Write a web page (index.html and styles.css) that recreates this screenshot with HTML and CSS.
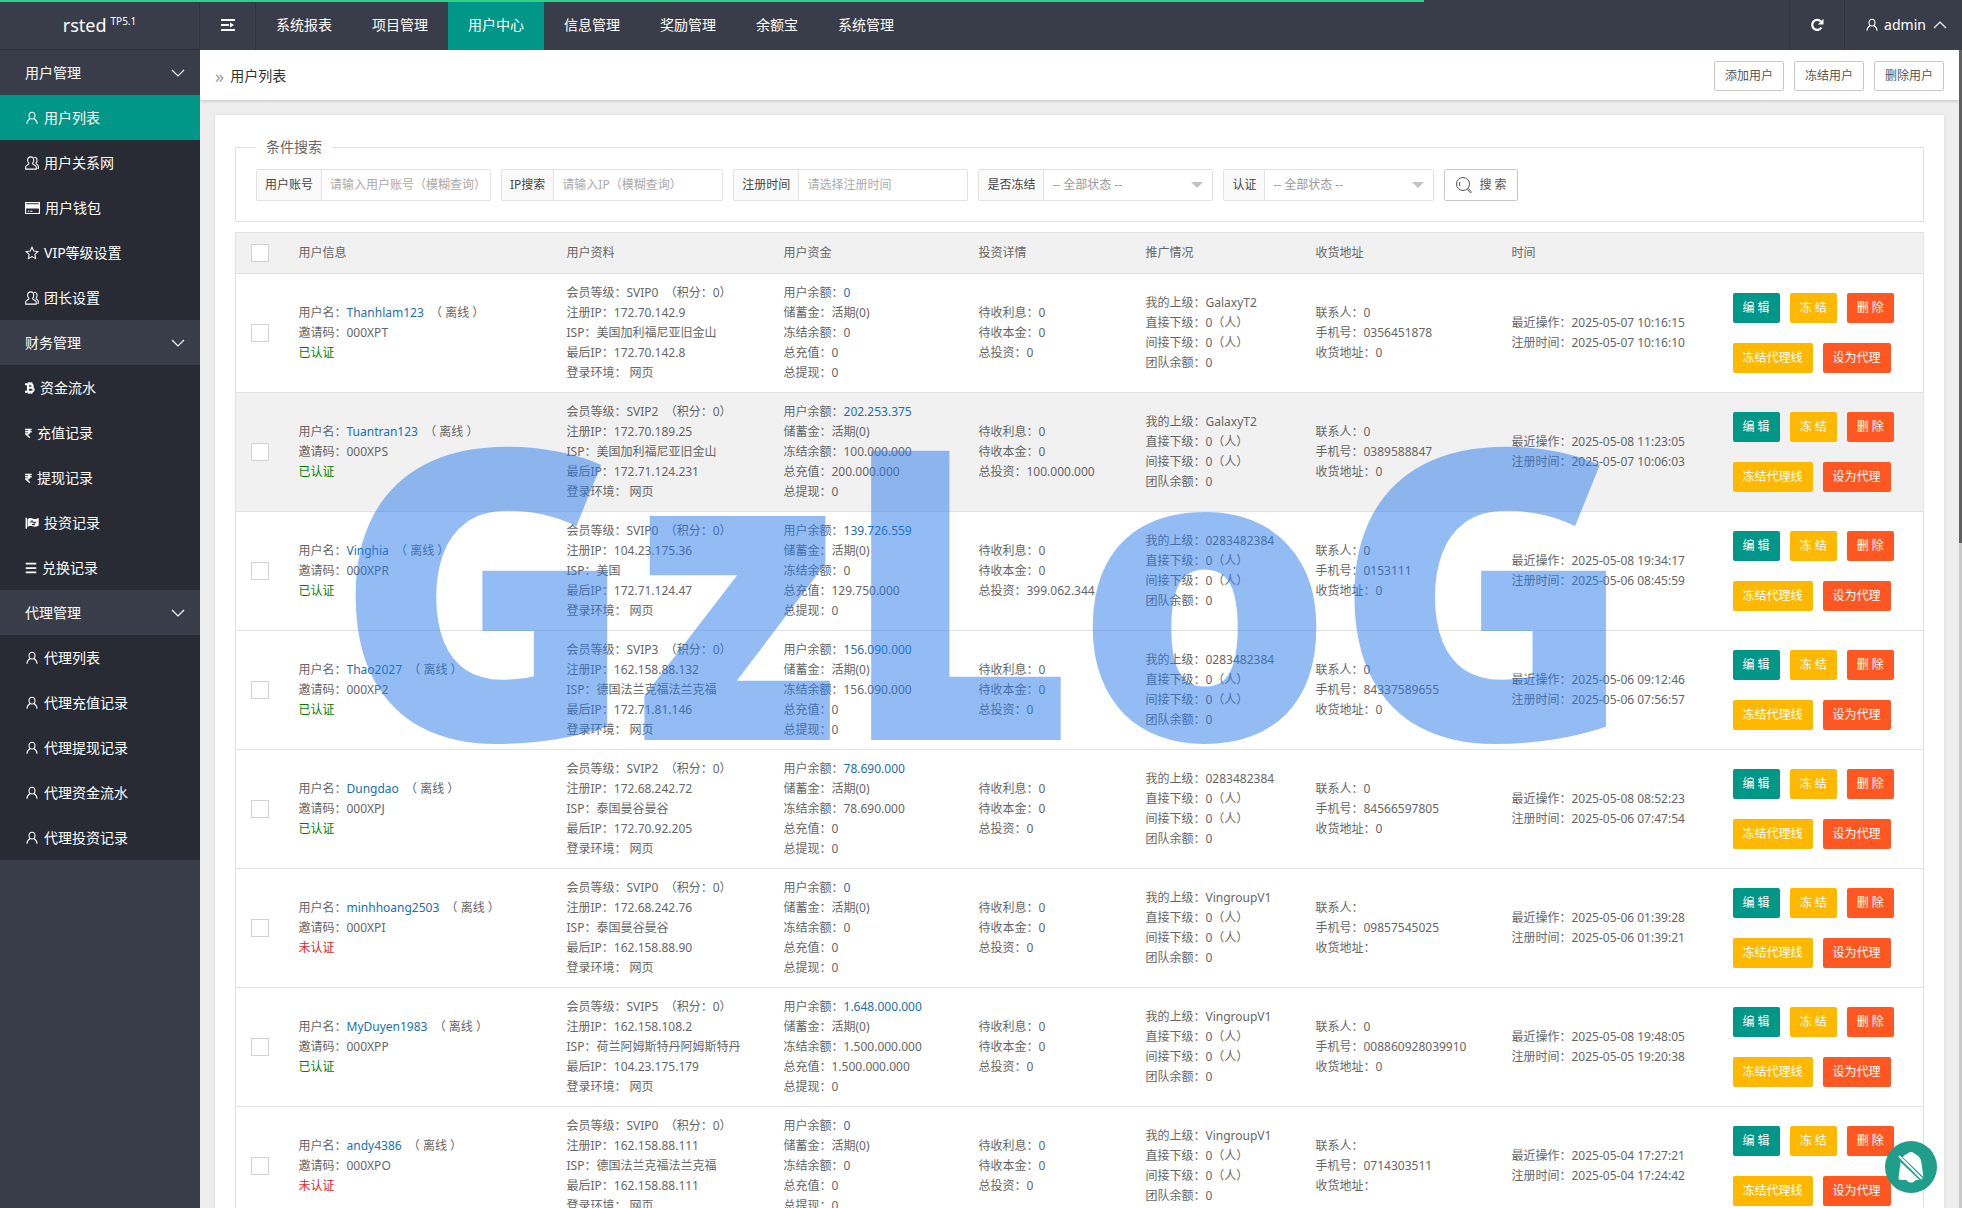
FILE: index.html
```html
<!DOCTYPE html>
<html lang="zh-CN">
<head>
    <meta charset="UTF-8">
    <meta name="viewport" content="width=device-width, initial-scale=1.0">
    <title>用户列表</title>
    <link rel="stylesheet" href="styles.css">
</head>
<body>
    <!-- icon set -->
    <svg class="sprite" aria-hidden="true">
        <symbol id="i-user" viewBox="0 0 16 16"><path d="M8 9.2c-2 0-3.4-1.7-3.4-4S6 1.4 8 1.4s3.4 1.6 3.4 3.8S10 9.200 8 9.200zM6 8.600c-2 1-3.600 3-3.800 6M10 8.600c2 1 3.600 3 3.800 6"/></symbol>
        <symbol id="i-group" viewBox="0 0 16 16"><path d="M6.500 1c2.200 0 3.500 1.600 3.500 3.800 0 1.700-.8 2.900-1.400 3.700-.3 1.200 3.700 1.700 4.300 3.700V15H.8v-2.800c.5-2 4-2.500 3.700-3.700C3.800 7.700 3 6.500 3 4.800 3 2.600 4.300 1 6.500 1zM10.500 1.400c2 0 3.300 1.400 3.300 3.400 0 1.700-.7 2.700-1.200 3.400-.1 1.200 2.500 1.800 2.800 3.800V14H14"/></symbol>
        <symbol id="i-card" viewBox="0 0 16 14"><path d="M.6 1.200h14.800v11.600H.6zM3 10.500h1.500M5.500 10.500H8"/><path fill="currentColor" d="M1 3.700h14v3.300H1z"/></symbol>
        <symbol id="i-star" viewBox="0 0 16 16"><path d="M8 1.500l2 4.300 4.700.6-3.400 3.300.8 4.700L8 12.100l-4.100 2.300.8-4.700L1.300 6.400 6 5.800z"/></symbol>
        <symbol id="i-btc" viewBox="0 0 12 16"><path stroke-width="2.400" d="M0 3.500h6.500c3.600 0 3.600 4.200 0 4.200H3.500M7 7.700c4.500 0 4.500 4.800 0 4.800H0M3.500 3.500v9M4.700 1v2M7.700 1v2M4.700 13v2M7.700 13v2"/></symbol>
        <symbol id="i-rupee" viewBox="0 0 10 16"><path stroke-width="2" d="M0 3h9.500M0 6.200h9.500M0 3h3c4.500 0 4.500 6.200 0 6.200H1l6 5.500"/></symbol>
        <symbol id="i-flag" viewBox="0 0 16 16"><path stroke-width="1.600" d="M1.500 2v12.500"/><path fill="currentColor" d="M3.500 4c2-1.500 4-1 5.500-.3s3 .6 6-.7v7.500c-2.500 1.300-4.300 1.400-6 .6s-3.500-.8-5.500.4z"/><path stroke="#282b33" d="M5.500 7.200l2.500-.7v-2M8 6.500l2.500 1 2.500-.7M8 9.500l2.500.5V7.500"/></symbol>
        <symbol id="i-bars" viewBox="0 0 12 16"><path stroke-width="2" d="M0 3h12M0 8h12M0 13h12"/></symbol>
        <symbol id="i-down" viewBox="0 0 14 14"><path d="M1 4l6 6 6-6"/></symbol>
        <symbol id="i-up" viewBox="0 0 14 14"><path d="M1 10l6-6 6 6"/></symbol>
        <symbol id="i-fold" viewBox="0 0 14 14"><path stroke-width="2" d="M0 2h14M0 7h8M0 12h14"/><path fill="currentColor" stroke="none" d="M9 4.500L13 7 9 9.500z"/></symbol>
        <symbol id="i-refresh" viewBox="0 0 14 14"><path stroke-width="2.200" d="M11.500 9.500a5 5 0 1 1-.6-6"/><path fill="currentColor" stroke="none" d="M13.500.8v5.700H7.800z"/></symbol>
        <symbol id="i-search" viewBox="0 0 18 18"><circle cx="8" cy="8" r="6.500"/><path d="M5 6a4 4 0 0 0 0 4M13 12.500l3.500 3.300-1 1-3.400-3.500"/></symbol>
    </svg>

    <div class="progress"></div>

    <header class="topbar">
        <a class="logo" href="#">rsted <sup>TP5.1</sup></a>
        <a class="fold" href="#" aria-label="菜单"><svg class="icon"><use href="#i-fold"/></svg></a>
        <nav class="nav">
            <a href="#">系统报表</a>
            <a href="#">项目管理</a>
            <a href="#" class="active">用户中心</a>
            <a href="#">信息管理</a>
            <a href="#">奖励管理</a>
            <a href="#">余额宝</a>
            <a href="#">系统管理</a>
        </nav>
        <a class="refresh" href="#" aria-label="刷新"><svg class="icon"><use href="#i-refresh"/></svg></a>
        <a class="account" href="#"><svg class="icon"><use href="#i-user"/></svg>admin<svg class="icon caret"><use href="#i-up"/></svg></a>
    </header>

    <div class="layout">
        <aside class="sidebar">
            <a class="group" href="#">用户管理<svg class="icon"><use href="#i-down"/></svg></a>
            <a class="item active" href="#"><svg class="icon"><use href="#i-user"/></svg>用户列表</a>
            <a class="item" href="#"><svg class="icon"><use href="#i-group"/></svg>用户关系网</a>
            <a class="item" href="#"><svg class="icon wide"><use href="#i-card"/></svg>用户钱包</a>
            <a class="item" href="#"><svg class="icon"><use href="#i-star"/></svg>VIP等级设置</a>
            <a class="item" href="#"><svg class="icon"><use href="#i-group"/></svg>团长设置</a>
            <a class="group" href="#">财务管理<svg class="icon"><use href="#i-down"/></svg></a>
            <a class="item" href="#"><svg class="icon narrow"><use href="#i-btc"/></svg>资金流水</a>
            <a class="item" href="#"><svg class="icon slim"><use href="#i-rupee"/></svg>充值记录</a>
            <a class="item" href="#"><svg class="icon slim"><use href="#i-rupee"/></svg>提现记录</a>
            <a class="item" href="#"><svg class="icon"><use href="#i-flag"/></svg>投资记录</a>
            <a class="item" href="#"><svg class="icon bars"><use href="#i-bars"/></svg>兑换记录</a>
            <a class="group" href="#">代理管理<svg class="icon"><use href="#i-down"/></svg></a>
            <a class="item" href="#"><svg class="icon"><use href="#i-user"/></svg>代理列表</a>
            <a class="item" href="#"><svg class="icon"><use href="#i-user"/></svg>代理充值记录</a>
            <a class="item" href="#"><svg class="icon"><use href="#i-user"/></svg>代理提现记录</a>
            <a class="item" href="#"><svg class="icon"><use href="#i-user"/></svg>代理资金流水</a>
            <a class="item" href="#"><svg class="icon"><use href="#i-user"/></svg>代理投资记录</a>
        </aside>

        <main class="main">
            <div class="crumb">
                <span class="arrows">»</span>
                <h1>用户列表</h1>
                <button class="btn" type="button">添加用户</button>
                <button class="btn" type="button">冻结用户</button>
                <button class="btn" type="button">删除用户</button>
            </div>

            <div class="card">
                <form>
                    <fieldset class="search">
                        <legend>条件搜索</legend>
                        <div class="field">
                            <label for="username">用户账号</label>
                            <input id="username" type="text" placeholder="请输入用户账号（模糊查询）">
                        </div>
                        <div class="field">
                            <label for="ip">IP搜索</label>
                            <input id="ip" type="text" placeholder="请输入IP（模糊查询）">
                        </div>
                        <div class="field">
                            <label for="regtime">注册时间</label>
                            <input id="regtime" type="text" placeholder="请选择注册时间">
                        </div>
                        <div class="field select">
                            <label for="frozen">是否冻结</label>
                            <select id="frozen"><option>-- 全部状态 --</option></select>
                        </div>
                        <div class="field select">
                            <label for="verified">认证</label>
                            <select id="verified"><option>-- 全部状态 --</option></select>
                        </div>
                        <button class="btn btn-search" type="button"><svg class="icon"><use href="#i-search"/></svg>搜 索</button>
                    </fieldset>
                </form>

                <table class="users">
                    <colgroup>
                        <col class="c-check">
                        <col class="c-info">
                        <col class="c-profile">
                        <col class="c-funds">
                        <col class="c-invest">
                        <col class="c-promo">
                        <col class="c-address">
                        <col class="c-time">
                        <col>
                    </colgroup>
                    <thead>
                        <tr>
                            <th><input type="checkbox" aria-label="全选"></th>
                            <th>用户信息</th>
                            <th>用户资料</th>
                            <th>用户资金</th>
                            <th>投资详情</th>
                            <th>推广情况</th>
                            <th>收货地址</th>
                            <th>时间</th>
                            <th></th>
                        </tr>
                    </thead>
                    <tbody id="rows"></tbody>
                </table>
            </div>
        </main>
        <div class="scroll"></div>
    </div>

    <div class="watermark">GzLoG</div>

    <button class="bell" type="button" aria-label="通知">
        <svg viewBox="0 0 52 52"><path fill="#fff" d="M26 11c2 0 3 1.500 4 2 4 1.500 6 5 6.500 9l2 15c0 1.500-1 2-3 2h-5c-1 2-3 2.500-4.500 2.500s-3.500-.5-4.500-2.500h-5c-2 0-3-.5-3-2l2-15c.5-4 3-8 6.500-9 1-.5 2-2 4-2z"/><path stroke="#1f9e8c" stroke-width="5" d="M14 16l24 23"/><path stroke="#fff" stroke-width="2" d="M14 15l23 23"/></svg>
    </button>

    <script>
        // name, code, verified, level, reg ip, isp, last ip, balance, frozen, recharge, invested, superior, contact, phone, address, last active, registered
        const users = [
            ['Thanhlam123', '000XPT', true, 'SVIP0', '172.70.142.9', '美国加利福尼亚旧金山', '172.70.142.8', '0', '0', '0', '0', 'GalaxyT2', '0', '0356451878', '0', '2025-05-07 10:16:15', '2025-05-07 10:16:10'],
            ['Tuantran123', '000XPS', true, 'SVIP2', '172.70.189.25', '美国加利福尼亚旧金山', '172.71.124.231', '202.253.375', '100.000.000', '200.000.000', '100.000.000', 'GalaxyT2', '0', '0389588847', '0', '2025-05-08 11:23:05', '2025-05-07 10:06:03'],
            ['Vinghia', '000XPR', true, 'SVIP0', '104.23.175.36', '美国', '172.71.124.47', '139.726.559', '0', '129.750.000', '399.062.344', '0283482384', '0', '0153111', '0', '2025-05-08 19:34:17', '2025-05-06 08:45:59'],
            ['Thao2027', '000XP2', true, 'SVIP3', '162.158.88.132', '德国法兰克福法兰克福', '172.71.81.146', '156.090.000', '156.090.000', '0', '0', '0283482384', '0', '84337589655', '0', '2025-05-06 09:12:46', '2025-05-06 07:56:57'],
            ['Dungdao', '000XPJ', true, 'SVIP2', '172.68.242.72', '泰国曼谷曼谷', '172.70.92.205', '78.690.000', '78.690.000', '0', '0', '0283482384', '0', '84566597805', '0', '2025-05-08 08:52:23', '2025-05-06 07:47:54'],
            ['minhhoang2503', '000XPI', false, 'SVIP0', '172.68.242.76', '泰国曼谷曼谷', '162.158.88.90', '0', '0', '0', '0', 'VingroupV1', '', '09857545025', '', '2025-05-06 01:39:28', '2025-05-06 01:39:21'],
            ['MyDuyen1983', '000XPP', true, 'SVIP5', '162.158.108.2', '荷兰阿姆斯特丹阿姆斯特丹', '104.23.175.179', '1.648.000.000', '1.500.000.000', '1.500.000.000', '0', 'VingroupV1', '0', '008860928039910', '0', '2025-05-08 19:48:05', '2025-05-05 19:20:38'],
            ['andy4386', '000XPO', false, 'SVIP0', '162.158.88.111', '德国法兰克福法兰克福', '162.158.88.111', '0', '0', '0', '0', 'VingroupV1', '', '0714303511', '', '2025-05-04 17:27:21', '2025-05-04 17:24:42']
        ];

        document.getElementById('rows').innerHTML = users.map(function (u) {
            const [name, code, verified, level, regIp, isp, lastIp, balance, frozen, recharge, invested, superior, contact, phone, address, active, registered] = u;
            return `<tr>
                <td><input type="checkbox" aria-label="${name}"></td>
                <td>用户名：<a href="#">${name}</a>&nbsp; （ 离线 ）<br>邀请码：${code}<br>${verified ? '<span class="ok">已认证</span>' : '<span class="no">未认证</span>'}</td>
                <td>会员等级：${level}&nbsp; （积分：0）<br>注册IP：${regIp}<br>ISP：${isp}<br>最后IP：${lastIp}<br>登录环境： 网页</td>
                <td>用户余额：<a href="#">${balance}</a><br>储蓄金：活期(0)<br>冻结余额：${frozen}<br>总充值：${recharge}<br>总提现：0</td>
                <td>待收利息：0<br>待收本金：0<br>总投资：${invested}</td>
                <td>我的上级：${superior}<br>直接下级：0（人）<br>间接下级：0（人）<br>团队余额：0</td>
                <td>联系人：${contact}<br>手机号：${phone}<br>收货地址：${address}</td>
                <td>最近操作：${active}<br>注册时间：${registered}</td>
                <td>
                    <div class="ops">
                        <button class="op green" type="button">编 辑</button>
                        <button class="op yellow" type="button">冻 结</button>
                        <button class="op red" type="button">删 除</button>
                    </div>
                    <div class="ops">
                        <button class="op yellow" type="button">冻结代理线</button>
                        <button class="op red" type="button">设为代理</button>
                    </div>
                </td>
            </tr>`;
        }).join('');
    </script>
</body>
</html>
```

FILE: styles.css
```css
* {
    box-sizing: border-box;
}
body {
    margin: 0;
    height: 100vh;
    display: flex;
    flex-direction: column;
    overflow: hidden;
    background: #eee;
    color: #666;
    font: 12px/20px "Noto Sans", "Noto Sans CJK SC", sans-serif;
}
a {
    color: #1a6fb0;
    text-decoration: none;
}
button, input, select {
    font: inherit;
    color: inherit;
}
.sprite {
    position: absolute;
    width: 0;
    height: 0;
}
.icon {
    width: 14px;
    height: 14px;
    flex: none;
    fill: none;
    stroke: currentColor;
    stroke-width: 1.2;
}
.progress {
    position: absolute;
    top: 0;
    left: 0;
    width: 1424px;
    max-width: 100%;
    height: 2px;
    background: #2fd08a;
    z-index: 2;
}

/* top bar */
.topbar {
    display: flex;
    flex: none;
    height: 50px;
    background: #393d49;
    font-size: 14px;
}
.topbar a {
    display: flex;
    align-items: center;
    justify-content: center;
    color: #fff;
}
.topbar .logo {
    width: 200px;
    font-size: 18px;
    border-right: 1px solid #30333d;
    border-bottom: 1px solid #30333d;
}
.logo sup {
    margin: 0 0 8px 4px;
    font-size: 10px;
    line-height: 12px;
}
.topbar .fold {
    width: 56px;
    border-right: 1px solid #30333d;
}
.nav {
    display: flex;
    flex: 1;
}
.nav a {
    padding: 0 20px;
}
.nav .active {
    background: #009688;
}
.topbar .refresh {
    width: 56px;
    border-left: 1px solid #30333d;
    border-right: 1px solid #30333d;
}
.topbar .account {
    width: 117px;
    padding-left: 5px;
    gap: 5px;
}
.account .caret {
    margin-left: 2px;
}

/* side menu */
.layout {
    display: flex;
    flex: 1;
    min-height: 0;
}
.sidebar {
    flex: none;
    width: 200px;
    background: #393d49;
    font-size: 14px;
}
.sidebar a {
    display: flex;
    align-items: center;
    height: 45px;
    padding: 0 15px 0 25px;
    color: #fff;
}
.sidebar .group {
    justify-content: space-between;
}
.sidebar .item {
    gap: 5px;
    background: #282b33;
}
.sidebar .active {
    background: #009688;
}
.sidebar .wide {
    width: 15px;
}
.sidebar .narrow {
    width: 10px;
}
.sidebar .slim {
    width: 7px;
}
.sidebar .bars {
    width: 12px;
}

/* page */
.main {
    flex: 1;
    min-width: 0;
    overflow: hidden;
}
.scroll {
    flex: none;
    width: 3px;
    background: linear-gradient(#5f5f5f 493px, #c8c8c8 493px);
}
.crumb {
    display: flex;
    align-items: center;
    gap: 10px;
    height: 50px;
    padding: 2px 15px 0;
    background: #fff;
    box-shadow: 0 1px 3px rgba(0, 0, 0, 0.2);
}
.crumb h1 {
    flex: 1;
    margin: 0 0 0 -4px;
    font-size: 14px;
    line-height: 22px;
    font-weight: normal;
    color: #333;
}
.arrows {
    font-size: 18px;
    color: #999;
}
.btn {
    height: 30px;
    padding: 0 10px;
    border: 1px solid #c9c9c9;
    border-radius: 2px;
    background: #fff;
    color: #555;
}
.card {
    margin: 15px;
    padding: 20px;
    background: #fff;
    box-shadow: 0 0 3px rgba(0, 0, 0, 0.1);
}

/* search form */
.search {
    display: flex;
    gap: 10px;
    margin: 0 0 10px;
    padding: 10px 20px 20px;
    border: 1px solid #e2e2e2;
}
.search legend {
    padding: 0 10px;
    font-size: 14px;
    line-height: 24px;
}
.field {
    display: flex;
    height: 32px;
    border: 1px solid #e2e2e2;
    border-radius: 2px;
}
.field label {
    padding: 5px 8px;
    border-right: 1px solid #e2e2e2;
    background: #fafafa;
    color: #444;
}
.field input, .field select {
    width: 168px;
    padding: 0 8px;
    border: 0;
    background: #fff;
    color: #999;
}
.field input::placeholder {
    color: #aaa;
}
.field select {
    appearance: none;
}
.select {
    position: relative;
}
.select::after {
    content: "";
    position: absolute;
    top: 12px;
    right: 9px;
    border: 6px solid transparent;
    border-top-color: #c2c2c2;
    pointer-events: none;
}
.btn-search {
    display: flex;
    align-items: center;
    gap: 6px;
    height: 32px;
}
.btn-search .icon {
    width: 18px;
    height: 18px;
    stroke-width: 1;
}

/* user table */
.users {
    width: 100%;
    table-layout: fixed;
    border-collapse: collapse;
    border: 1px solid #e2e2e2;
}
.c-check { width: 48px; }
.c-info { width: 268px; }
.c-profile { width: 217px; }
.c-funds { width: 195px; }
.c-invest { width: 167px; }
.c-promo { width: 170px; }
.c-address { width: 196px; }
.c-time { width: 221px; }
.users th, .users td {
    padding: 9px 15px;
    border-bottom: 1px solid #e2e2e2;
    text-align: left;
    font-weight: normal;
    white-space: nowrap;
}
.users th {
    height: 41px;
    background: #f1f1f1;
}
.users tbody tr:nth-child(2) {
    background: #f1f1f1;
}
.users input {
    appearance: none;
    display: block;
    width: 18px;
    height: 18px;
    margin: 0;
    border: 1px solid #d2d2d2;
    background: #fff;
}
.ok {
    color: #008000;
}
.no {
    color: #f02020;
}
.ops {
    display: flex;
    gap: 10px;
}
.ops + .ops {
    margin-top: 20px;
}
.op {
    height: 30px;
    padding: 0 10px;
    border: 0;
    border-radius: 2px;
    color: #fff;
}
.green { background: #009688; }
.yellow { background: #ffb800; }
.red { background: #ff5722; }

/* overlays */
.watermark {
    position: absolute;
    top: 308px;
    left: 335px;
    font: 900 405px/550px "Noto Sans", sans-serif;
    color: rgba(39, 121, 235, 0.5);
    pointer-events: none;
}
.bell {
    position: absolute;
    right: 25px;
    bottom: 15px;
    width: 52px;
    height: 52px;
    padding: 0;
    border: 0;
    border-radius: 50%;
    background: #1f9e8c;
}
.bell svg {
    display: block;
}
```
